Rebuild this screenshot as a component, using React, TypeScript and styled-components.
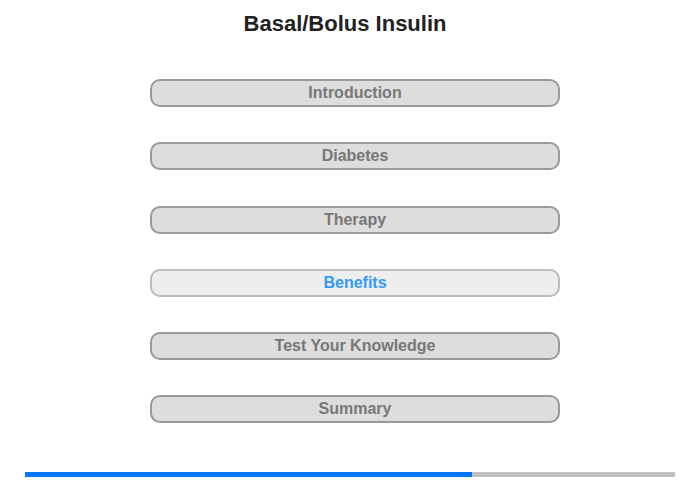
import React from "react";
import styled, { createGlobalStyle } from "styled-components";

const Global = createGlobalStyle`
  html, body { margin: 0; padding: 0; background: #fff; }
  body { font-family: "Liberation Sans", Arial, sans-serif; }
`;

const Page = styled.div`
  width: 700px;
  height: 480px;
  display: flex;
  flex-direction: column;
  box-sizing: border-box;
`;

const Title = styled.h1`
  margin: 11px 0 0 0;
  padding-right: 10px;
  font-size: 22px;
  line-height: 26px;
  font-weight: bold;
  color: #222;
  text-align: center;
`;

const Menu = styled.nav`
  margin: 42px 0 0 150px;
  width: 410px;
  display: flex;
  flex-direction: column;
  gap: 35.25px;
`;

const MenuButton = styled.div<{ $active?: boolean }>`
  box-sizing: border-box;
  height: 28px;
  border: 2px solid ${(p) => (p.$active ? "#bbb" : "#999")};
  border-radius: 10px;
  background: ${(p) => (p.$active ? "#eee" : "#ddd")};
  color: ${(p) => (p.$active ? "#3399ff" : "#777")};
  font-size: 16px;
  font-weight: bold;
  display: flex;
  align-items: center;
  justify-content: center;
`;

const Progress = styled.div`
  margin: auto 0 3px 25px;
  width: 650px;
  height: 5px;
  background: #c0c0c0;
  display: flex;
`;

const Fill = styled.div`
  height: 100%;
  background: #0077ff;
`;

const items = [
  "Introduction",
  "Diabetes",
  "Therapy",
  "Benefits",
  "Test Your Knowledge",
  "Summary",
];

export default function App() {
  return (
    <>
      <Global />
      <Page>
        <Title>Basal/Bolus Insulin</Title>
        <Menu>
          {items.map((t) => (
            <MenuButton key={t} $active={t === "Benefits"}>
              {t}
            </MenuButton>
          ))}
        </Menu>
        <Progress>
          <Fill style={{ width: `${(447 / 650) * 100}%` }} />
        </Progress>
      </Page>
    </>
  );
}
